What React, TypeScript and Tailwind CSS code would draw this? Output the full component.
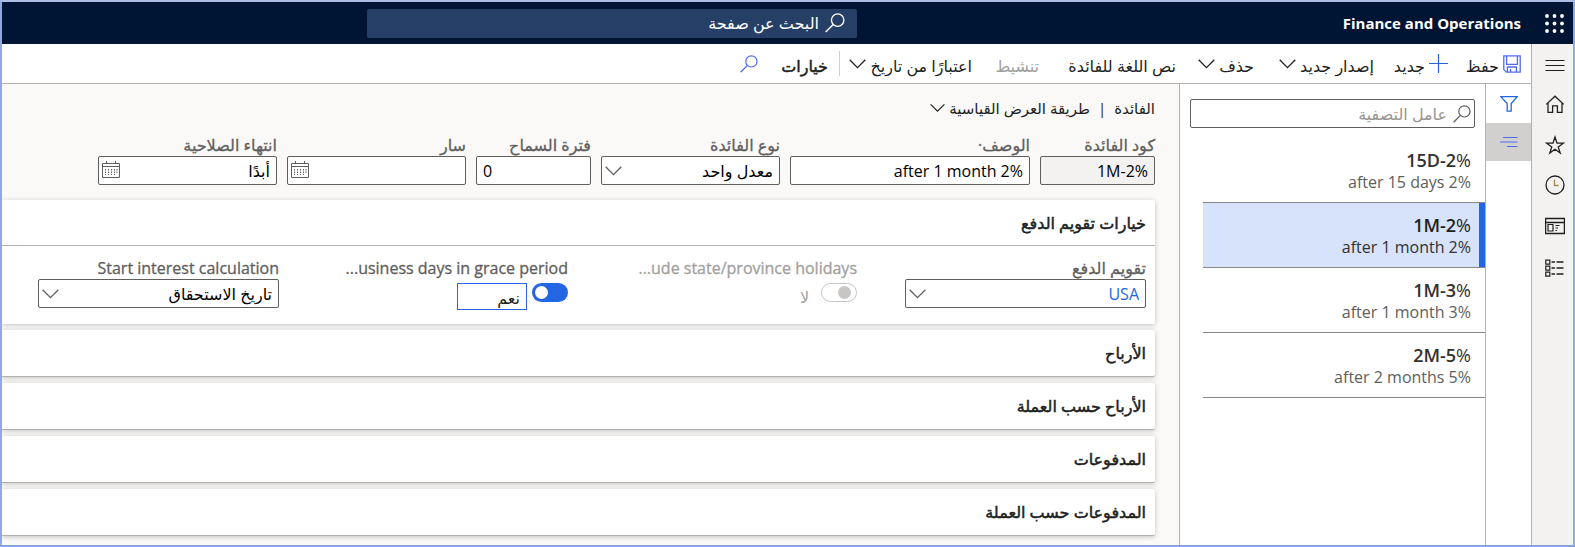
import type { ReactNode } from "react";

function Icon({ w, h, box, children, className = "" }: { w: number; h: number; box?: string; children: ReactNode; className?: string }) {
  return (
    <svg width={w} height={h} viewBox={box ?? `0 0 ${w} ${h}`} fill="none" stroke="currentColor" className={`shrink-0 ${className}`} aria-hidden="true">
      {children}
    </svg>
  );
}

const Search = ({ size = 18, className = "" }: { size?: number; className?: string }) => (
  <Icon w={size} h={size} box="0 0 18 18" className={className}>
    <circle cx="11.4" cy="6.4" r="5.6" strokeWidth="1.2" />
    <path d="M7.4 10.4L0.6 17.2" strokeWidth="1.3" />
  </Icon>
);

const Chevron = ({ className = "" }: { className?: string }) => (
  <Icon w={17} h={10} className={className}>
    <path d="M0.7 0.8L8.5 8.6L16.3 0.8" strokeWidth="1.3" />
  </Icon>
);

const Calendar = () => (
  <Icon w={18} h={17} className="text-[#605e5c]">
    <path d="M0.5 2.5h17v14h-17zM0.5 5.5h17" />
    <path d="M4.5 0v3M13.5 0v3" />
    <path d="M3.5 8v6M6.5 8v6M9.5 8v6M12.5 8v6M15 8v4" strokeDasharray="1.5 1" />
  </Icon>
);

const semiStroke = "[-webkit-text-stroke:0.5px_currentColor]";

function Command({ label, width, icon, menu, disabled, bold }: { label: string; width: string; icon?: ReactNode; menu?: boolean; disabled?: boolean; bold?: boolean }) {
  return (
    <button
      type="button"
      disabled={disabled}
      className={`flex h-full shrink-0 items-center gap-1 whitespace-nowrap text-[16px] leading-5 ${width} ${disabled ? "text-[#a19f9d]" : "text-[#201f1e]"} ${bold ? semiStroke : ""}`}
    >
      {icon}
      <span className="pt-1">{label}</span>
      {menu && <Chevron />}
    </button>
  );
}

const fieldBox = "h-[29px] w-full rounded-xs border border-[#605e5c] px-1.5 text-[16px] outline-none";

function Field({ id, label, width, children }: { id: string; label: ReactNode; width: string; children: ReactNode }) {
  return (
    <div className={`flex shrink-0 flex-col ${width}`}>
      <label htmlFor={id} className="h-[21px] whitespace-nowrap text-[16px] leading-[21px] text-[#605e5c] [-webkit-text-stroke:0.3px_currentColor]">
        {label}
      </label>
      {children}
    </div>
  );
}

function SelectBox({ id, value, link }: { id: string; value: string; link?: boolean }) {
  return (
    <div className="relative">
      <select id={id} className={`${fieldBox} appearance-none bg-white ${link ? "text-[#2266e3]" : "text-black"}`}>
        <option>{value}</option>
      </select>
      <Chevron className="pointer-events-none absolute top-2.5 left-1 text-[#605e5c]" />
    </div>
  );
}

function DateBox({ id, value }: { id: string; value: string }) {
  return (
    <div className="relative">
      <input id={id} defaultValue={value} className={`${fieldBox} bg-white text-black`} />
      <span className="pointer-events-none absolute top-[5px] left-1">
        <Calendar />
      </span>
    </div>
  );
}

const records = [
  { code: "15D-2", rate: "%", text: "after 15 days 2%" },
  { code: "1M-2", rate: "%", text: "after 1 month 2%", active: true },
  { code: "1M-3", rate: "%", text: "after 1 month 3%" },
  { code: "2M-5", rate: "%", text: "after 2 months 5%" },
];

const sections = ["الأرباح", "الأرباح حسب العملة", "المدفوعات", "المدفوعات حسب العملة"];

const railIcons = [
  {
    name: "القائمة",
    art: (
      <Icon w={20} h={20}>
        <path d="M0.5 5.5h19M0.5 10.5h19M0.5 15.5h19" strokeWidth="1.2" />
      </Icon>
    ),
  },
  {
    name: "الصفحة الرئيسية",
    art: (
      <Icon w={20} h={20}>
        <path d="M1.3 9.4L10 1.2l8.7 8.2M3 8v9.4h4.6v-6.6h4.8v6.6H17V8" strokeWidth="1.3" />
      </Icon>
    ),
  },
  {
    name: "المفضلة",
    art: (
      <Icon w={20} h={20}>
        <path d="M10 2l2 6.2h6.4l-5.2 3.7 2 6.1-5.2-3.7L4.8 18l2-6.1-5.2-3.7H8z" strokeWidth="1.3" />
      </Icon>
    ),
  },
  {
    name: "الأخيرة",
    art: (
      <Icon w={20} h={20}>
        <circle cx="10" cy="10" r="9" strokeWidth="1.3" />
        <path d="M9.5 4.5v6h4" stroke="#a8874f" strokeWidth="1.3" />
      </Icon>
    ),
  },
  {
    name: "مساحات العمل",
    art: (
      <Icon w={20} h={20}>
        <path d="M0.6 2.5h18.8v15H0.6zM0.6 6.5h18.8" strokeWidth="1.3" />
        <path d="M3 8.5h5v6.5H3zM10.5 9.5h4M10.5 12h2.5M10.5 14.5h1.5" strokeWidth="1.2" />
      </Icon>
    ),
  },
  {
    name: "الوحدات",
    art: (
      <Icon w={20} h={20}>
        <path d="M0.8 2.1h4v4h-4zM0.8 8.1h4v4h-4zM0.8 14.1h4v4h-4z" strokeWidth="1.2" />
        <path d="M6.5 4H10M11.5 4h7M6.5 10H10M11.5 10h7M6.5 16H10M11.5 16h7" strokeWidth="1.3" />
      </Icon>
    ),
  },
];

export default function App() {
  return (
    <div dir="rtl" className="flex min-h-screen flex-col overflow-hidden border-2 border-t-[#a9c0e4] border-r-[#8eabe0] border-b-[#86a5dc] border-l-[#8eabe0] bg-white font-['Open_Sans','DejaVu_Sans',sans-serif] text-[#201f1e]">
      <header className="flex h-[42px] shrink-0 items-center bg-[#001433] text-white">
        <div className="flex flex-1 items-center gap-6 ps-[9px]">
          <button type="button" aria-label="مشغل التطبيقات">
            <svg width="19" height="19" viewBox="0 0 19 19" fill="currentColor" aria-hidden="true">
              {[2, 9.5, 17].map((y) => [2, 9.5, 17].map((x) => <circle key={`${x}-${y}`} cx={x} cy={y} r="1.9" />))}
            </svg>
          </button>
          <h1 dir="ltr" className="text-[15px] leading-5 font-bold">Finance and Operations</h1>
        </div>
        <label className="flex h-[29px] w-[490px] shrink-0 items-center gap-1.5 rounded-xs bg-[#263f66] ps-3">
          <Search size={20} />
          <input type="search" placeholder="البحث عن صفحة" className="min-w-0 flex-1 bg-transparent text-[16px] outline-none placeholder:text-white placeholder:opacity-100" />
        </label>
        <div className="w-[365px] shrink-0" />
      </header>

      <div className="flex flex-1">
        <nav className="flex w-[42px] shrink-0 flex-col items-center gap-5 border-l border-[#b3b0ad] bg-[#f3f2f1] pt-[11px] pl-1">
          {railIcons.map((item, i) => (
            <button key={item.name} type="button" aria-label={item.name} className={`flex w-5 items-center ${i > 3 ? "h-[22px]" : "h-5"}`}>
              {item.art}
            </button>
          ))}
        </nav>

        <div className="flex min-w-0 flex-1 flex-col">
          <div role="toolbar" className="flex h-10 shrink-0 items-center border-b border-[#b3b0ad] ps-2.5">
            <Command
              label="حفظ"
              width="w-[73px]"
              icon={
                <Icon w={18} h={18} className="text-[#4f6bed]">
                  <path d="M0.8 0.8h16.4v16.4H3.4L0.8 14.6zM3.6 0.8v8.6h10.8V0.8M4.4 17v-5h9v5M7.6 17v-3" strokeWidth="1.3" />
                </Icon>
              }
            />
            <Command
              label="جديد"
              width="w-[74px]"
              icon={
                <Icon w={19} h={19} className="text-[#2266e3]">
                  <path d="M9.5 0v19M0 9.5h19" strokeWidth="1.2" />
                </Icon>
              }
            />
            <Command label="إصدار جديد" width="w-[120px]" menu />
            <Command label="حذف" width="w-[78px]" menu />
            <Command label="نص اللغة للفائدة" width="w-[137px]" />
            <Command label="تنشيط" width="w-[67px]" disabled />
            <Command label="اعتبارًا من تاريخ" width="w-[132px]" menu />
            <div className="h-[25px] w-px bg-[#d2d0ce]" />
            <div className="w-[11px]" />
            <Command label="خيارات" width="w-[70px]" bold />
            <button type="button" aria-label="بحث" className="text-[#4f6bed]">
              <Search />
            </button>
          </div>

          <div className="flex flex-1">
            <div className="flex w-[46px] shrink-0 flex-col border-l border-[#b3b0ad]">
              <button type="button" aria-label="عامل التصفية" className="flex h-[39px] items-center justify-center text-[#2266e3]">
                <Icon w={18} h={16}>
                  <path d="M0.8 0.6h16.4l-6 7v7.6H7.2V7.6z" strokeWidth="1.3" />
                </Icon>
              </button>
              <button type="button" aria-label="القائمة" className="flex h-[38px] items-center justify-center bg-[#d2d0ce] text-[#4f6bed]">
                <Icon w={18} h={12}>
                  <path d="M3 1.5h14.5M0 6h17.5M7 10.5h10.5" strokeWidth="1.2" />
                </Icon>
              </button>
            </div>

            <aside className="flex w-[306px] shrink-0 flex-col border-l border-[#b3b0ad] pt-[15px]">
              <label className="mx-2.5 flex h-[29px] items-center gap-1.5 rounded-xs border border-[#605e5c] ps-[3px]">
                <Search className="text-[#605e5c]" />
                <input placeholder="عامل التصفية" className="min-w-0 flex-1 bg-transparent text-[16px] outline-none placeholder:text-[#979593]" />
              </label>
              <ul className="me-[23px] mt-2.5 flex flex-col">
                {records.map((r) => (
                  <li key={r.text} className="border-b border-[#8a8886]">
                    <button
                      type="button"
                      dir="ltr"
                      className={`flex h-16 w-full flex-col items-end justify-center border-r-[6px] pt-0.5 pr-2 ${r.active ? "border-[#2266e3] bg-[#d7e3fb] text-[#201f1e]" : "border-transparent text-[#323130]"}`}
                    >
                      <span className="text-[18px] leading-[22px] font-semibold">
                        {r.code}
                        <span className="font-normal">{r.rate}</span>
                      </span>
                      <span className={`text-[16px] leading-[22px] ${r.active ? "text-[#323130]" : "text-[#605e5c]"}`}>{r.text}</span>
                    </button>
                  </li>
                ))}
              </ul>
            </aside>

            <main className="flex min-w-0 flex-1 flex-col bg-[#faf9f8] ps-6">
              <div className="mt-3.5 flex h-5 items-center gap-2 text-[15px] leading-5">
                <a href="#interest">الفائدة</a>
                <span>|</span>
                <button type="button" className="flex items-center gap-1">
                  <span>طريقة العرض القياسية</span>
                  <Chevron className="w-[15px]" />
                </button>
              </div>

              <form className="mt-[17px] flex gap-2.5">
                <Field id="code" label="كود الفائدة" width="w-[115px]">
                  <input id="code" dir="ltr" readOnly defaultValue="1M-2%" className={`${fieldBox} bg-[#f3f2f1] text-right text-black`} />
                </Field>
                <Field id="description" label="الوصف·" width="w-[240px]">
                  <input id="description" dir="ltr" defaultValue="after 1 month 2%" className={`${fieldBox} bg-white text-right text-black`} />
                </Field>
                <Field id="type" label="نوع الفائدة" width="w-[179px]">
                  <SelectBox id="type" value="معدل واحد" />
                </Field>
                <Field id="grace" label="فترة السماح" width="w-[115px]">
                  <input id="grace" dir="ltr" defaultValue="0" className={`${fieldBox} bg-white text-black`} />
                </Field>
                <Field id="effective" label="سار" width="w-[179px]">
                  <DateBox id="effective" value="" />
                </Field>
                <Field id="expiration" label="انتهاء الصلاحية" width="w-[179px]">
                  <DateBox id="expiration" value="أبدًا" />
                </Field>
              </form>

              <div className="mt-[15px] flex flex-col gap-1.5">
                <section className="rounded-r-xs bg-white shadow-[0_1px_5px_rgba(0,0,0,0.22)]">
                  <h2 className={`flex h-[46px] items-center border-b border-[#b3b0ad] ps-[9px] text-[16px] ${semiStroke}`}>خيارات تقويم الدفع</h2>
                  <div className="flex h-[78px] gap-12 ps-[9px] pt-3">
                    <Field id="calendar" label="تقويم الدفع" width="w-[241px]">
                      <SelectBox id="calendar" value="USA" link />
                    </Field>
                    <div className="flex w-[241px] shrink-0 flex-col text-[#a19f9d]">
                      <label htmlFor="holidays" dir="ltr" className="h-[21px] text-right text-[16px] leading-[21px] whitespace-nowrap [-webkit-text-stroke:0.3px_currentColor]">
                        ...ude state/province holidays
                      </label>
                      <div className="mt-1 flex items-start gap-3">
                        <input
                          id="holidays"
                          type="checkbox"
                          role="switch"
                          disabled
                          className="flex h-[19px] w-9 appearance-none items-center rounded-full border border-[#c8c6c4] ps-[5px] before:h-[13px] before:w-[13px] before:rounded-full before:bg-[#c8c6c4]"
                        />
                        <span className="pt-1 text-[16px] leading-5">لا</span>
                      </div>
                    </div>
                    <div className="flex w-[241px] shrink-0 flex-col">
                      <label htmlFor="business" dir="ltr" className="h-[21px] text-right text-[16px] leading-[21px] whitespace-nowrap text-[#605e5c] [-webkit-text-stroke:0.3px_currentColor]">
                        ...usiness days in grace period
                      </label>
                      <div className="mt-1 flex items-start gap-[5px]">
                        <input
                          id="business"
                          type="checkbox"
                          role="switch"
                          defaultChecked
                          className="flex h-[19px] w-9 appearance-none items-center justify-end rounded-full bg-[#2266e3] pe-[3px] before:h-[13px] before:w-[13px] before:rounded-full before:bg-white"
                        />
                        <span className="flex h-[27px] w-[70px] items-center border border-[#2266e3] ps-1.5 pt-0.5 text-[16px]">نعم</span>
                      </div>
                    </div>
                    <Field id="start" label="Start interest calculation" width="w-[241px]">
                      <SelectBox id="start" value="تاريخ الاستحقاق" />
                    </Field>
                  </div>
                </section>
                {sections.map((title) => (
                  <section key={title} className="rounded-r-xs border-b border-[#b3b0ad] bg-white shadow-[0_1px_5px_rgba(0,0,0,0.22)]">
                    <h2>
                      <button type="button" className={`flex h-[46px] w-full items-center ps-[9px] text-[16px] ${semiStroke}`}>
                        {title}
                      </button>
                    </h2>
                  </section>
                ))}
              </div>
            </main>
          </div>
        </div>
      </div>
    </div>
  );
}
